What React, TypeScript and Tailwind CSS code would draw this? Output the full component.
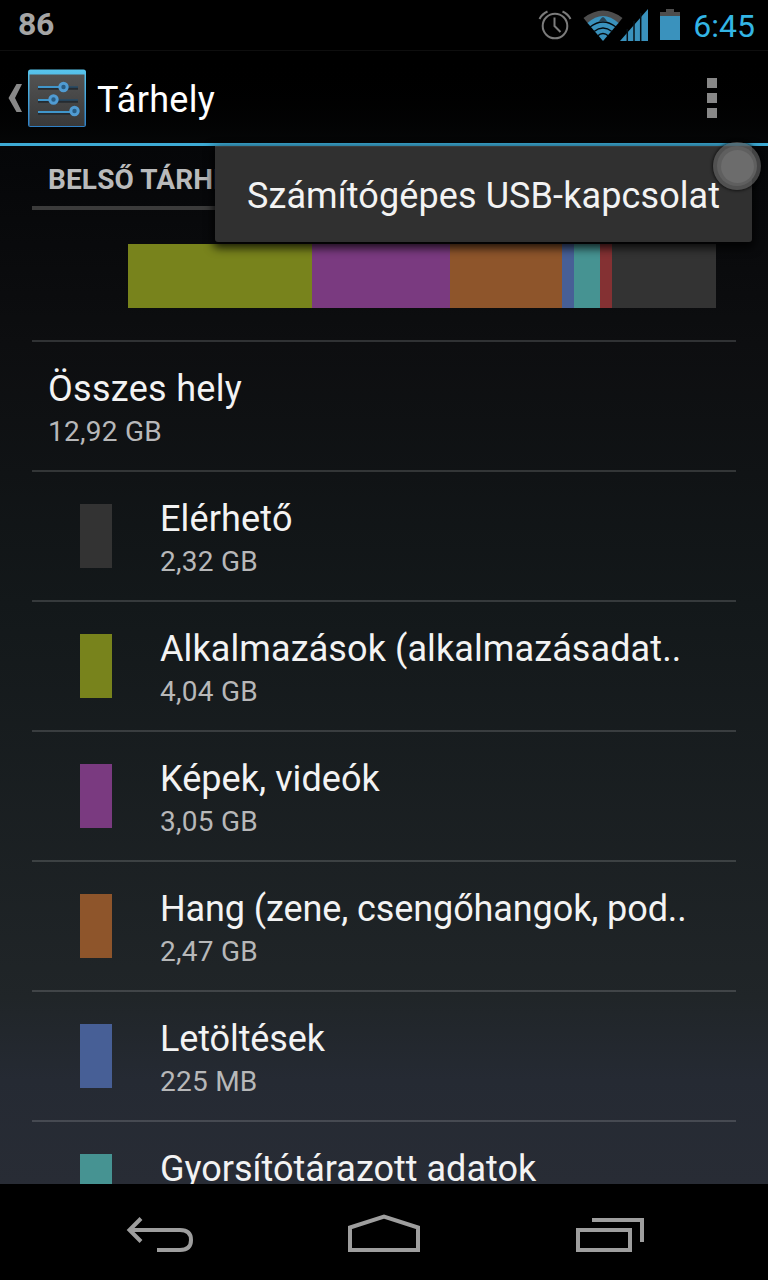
import clsx from "clsx";

type StorageItem = {
  label: string;
  size?: string;
  color: string;
  labelSpacing: string;
};

const segments = [
  { width: "w-[184px]", color: "bg-[#78831c]" },
  { width: "w-[138px]", color: "bg-[#7a3a80]" },
  { width: "w-[112px]", color: "bg-[#8e552b]" },
  { width: "w-[12px]", color: "bg-[#475f96]" },
  { width: "w-[26px]", color: "bg-[#469392]" },
  { width: "w-[12px]", color: "bg-[#843133]" },
  { width: "w-[104px]", color: "bg-[#333333]" },
];

const items: StorageItem[] = [
  { label: "Elérhető", size: "2,32 GB", color: "bg-[#333333]", labelSpacing: "tracking-[0.15px]" },
  { label: "Alkalmazások (alkalmazásadat..", size: "4,04 GB", color: "bg-[#78831c]", labelSpacing: "tracking-[0.1px]" },
  { label: "Képek, videók", size: "3,05 GB", color: "bg-[#7a3a80]", labelSpacing: "tracking-[0.05px]" },
  { label: "Hang (zene, csengőhangok, pod..", size: "2,47 GB", color: "bg-[#8e552b]", labelSpacing: "tracking-[-0.1px]" },
  { label: "Letöltések", size: "225 MB", color: "bg-[#475f96]", labelSpacing: "tracking-[-0.1px]" },
  { label: "Gyorsítótárazott adatok", color: "bg-[#469392]", labelSpacing: "tracking-normal" },
];

const AlarmIcon = () => (
  <svg width="34" height="34" viewBox="0 0 34 34" fill="none" stroke="#7b7b7b" strokeWidth="2">
    <circle cx="17" cy="19" r="12.3" />
    <path d="M16.500 10.500V19l6 6" />
    <path d="M1.500 12Q4 7 9.500 4.500M24.500 4.500Q30 7 32.500 12" />
  </svg>
);

const WifiIcon = () => (
  <svg width="40" height="32" viewBox="0 0 40 32">
    <path d="M.5 9Q20-6 39.500 9L35 14.500Q20 2 5 14.500Z" fill="#4d4d4d" />
    <path d="M4.500 14Q20 0 35.500 14L20 32Z" fill="#3a92bd" />
    <path d="M7 18Q20 8 33 18M11 22.500Q20 15.500 29 22.500M14.500 27Q20 22 25.500 27" fill="none" stroke="#050a0d" strokeWidth="1.500" />
    <path d="M15.500 13L18 9.500q2-3 4 0l2.500 3.500Q20 11.500 15.500 13Z" fill="#2b4554" />
  </svg>
);

const SignalIcon = () => (
  <svg width="28" height="32" viewBox="0 0 28 32">
    <path d="M0 32L28 0V32Z" fill="#3a92bd" />
    <path d="M7.300 20V32M14 12V32M20.700 4V32" stroke="#061116" strokeWidth="1.500" />
  </svg>
);

const BatteryIcon = () => (
  <svg width="20" height="31" viewBox="0 0 20 31">
    <path d="M6 0H14V3H20V8H0V3H6Z" fill="#4d4d4d" />
    <path d="M0 7H20V31H0Z" fill="#3a92bd" />
  </svg>
);

const SettingsIcon = () => (
  <svg width="58" height="59" viewBox="0 0 58 59" fill="none">
    <defs>
      <linearGradient id="plate" x1="0" y1="0" x2="0" y2="1">
        <stop offset="0" stopColor="#535353" />
        <stop offset="1" stopColor="#393939" />
      </linearGradient>
      <linearGradient id="edge" x1="0" y1="0" x2="0" y2="1">
        <stop offset="0" stopColor="#58c5ec" />
        <stop offset="1" stopColor="#2f7fc4" />
      </linearGradient>
    </defs>
    <rect x="0" y="0.500" width="58" height="57.500" rx="2.500" fill="url(#edge)" />
    <rect x="1.500" y="5.500" width="55" height="51.500" fill="url(#plate)" />
    <path d="M10 19.500H50M10 32.500H50M10 44.500H50" stroke="#252b31" strokeWidth="2.500" />
    <path d="M10 18H35M10 31H25M10 43H46" stroke="#4096cb" strokeWidth="2" />
    <path d="M35 18H50M25 31H50" stroke="#244a66" strokeWidth="1.500" />
    <g fill="#285c83" stroke="#509bd2" strokeWidth="3">
      <circle cx="35.500" cy="18" r="3.700" />
      <circle cx="25.500" cy="30.500" r="3.700" />
      <circle cx="46.500" cy="42" r="3.700" />
    </g>
  </svg>
);

const StatusBar = () => (
  <div className="flex h-[50px] items-start bg-black">
    <span className="ml-[18px] mt-[5px] text-[32px] leading-[38px] font-bold tracking-[-0.3px] text-[#a5a5a5]">86</span>
    <div className="ml-auto flex pr-[13px]">
      <div className="mt-[7px]"><AlarmIcon /></div>
      <div className="ml-[11px] mt-[9px]"><WifiIcon /></div>
      <div className="-ml-[3px] mt-[9px]"><SignalIcon /></div>
      <div className="ml-[12px] mt-[9px]"><BatteryIcon /></div>
      <span className="ml-[13px] mt-[7px] text-[32px] leading-[38px] text-[#33b5e5]">6:45</span>
    </div>
  </div>
);

const ActionBar = () => (
  <header className="flex h-[96px] items-center border-t border-b-[3px] border-t-[#0e0e0e] border-b-[#3daad4] bg-gradient-to-b from-black to-[#050607] pt-[2px]">
    <svg className="ml-[8px]" width="15" height="28" viewBox="0 0 15 28">
      <path d="M8.500 0H14L7 14L14 28H8.500L.5 14Z" fill="#888888" />
    </svg>
    <div className="ml-[5px]"><SettingsIcon /></div>
    <h1 className="ml-[11px] mt-[3px] text-[36px] leading-[42px] tracking-[0.3px] text-white">Tárhely</h1>
    <div className="ml-auto mr-[51px] flex flex-col gap-[5px]">
      <span className="size-[10px] bg-[#888888]" />
      <span className="size-[10px] bg-[#888888]" />
      <span className="size-[10px] bg-[#888888]" />
    </div>
  </header>
);

const NavBar = () => (
  <nav className="flex h-[96px] shrink-0 items-center bg-black">
    <svg width="768" height="96" viewBox="0 0 768 96" fill="none" stroke="#9e9e9e" strokeWidth="4">
      <path d="M141 34.500L129.500 46L141 57.500M130 46H180C188 46 191 50 191 56S188 66 180 66H157" />
      <path d="M350 66V43.500L384 32.500L418 43.500V66Z" />
      <path d="M578 46H630V66H578ZM592 36H642V58" />
    </svg>
  </nav>
);

const App: React.FC = () => {
  return (
    <div className="relative flex h-[1280px] w-[768px] flex-col overflow-hidden bg-black font-['Roboto',sans-serif]">
      <StatusBar />
      <ActionBar />

      <main className="flex-1 overflow-hidden bg-[linear-gradient(to_bottom,#050608_0%,#0d0e10_19%,#13181a_44%,#202528_82%,#252a33_90%,#282c35_100%)] px-[32px]">
        <h2 className="h-[64px] border-b-4 border-[#3b3b3b] pl-[16px] pt-[17px] text-[28px] leading-[33px] font-bold tracking-[0.12px] text-[#b9babb]">
          BELSŐ TÁRHELY
        </h2>

        {/* Usage bar */}
        <div className="ml-[96px] mt-[34px] flex h-[64px]">
          {segments.map((segment) => (
            <div key={segment.color} className={clsx(segment.width, segment.color)} />
          ))}
        </div>

        <section className="mt-[32px] h-[130px] border-t-2 border-[#303234] pl-[16px] pt-[26px]">
          <div className="text-[36px] leading-[42px] tracking-[0.3px] text-[#f3f3f3]">Összes hely</div>
          <div className="mt-[5px] text-[28px] leading-[33px] tracking-[0.25px] text-[#b7b8b9]">12,92 GB</div>
        </section>

        {items.map((item) => (
          <section key={item.label} className="flex h-[130px] border-t-2 border-white/15 pl-[48px]">
            <div className={clsx("mt-[32px] h-[64px] w-[32px]", item.color)} />
            <div className="ml-[48px] pt-[26px] whitespace-nowrap">
              <div className={clsx("text-[36px] leading-[42px] text-[#f3f3f3]", item.labelSpacing)}>{item.label}</div>
              {item.size && (
                <div className="mt-[5px] text-[28px] leading-[33px] tracking-[0.25px] text-[#b7b8b9]">{item.size}</div>
              )}
            </div>
          </section>
        ))}
      </main>

      <NavBar />

      {/* Overflow menu */}
      <div className="absolute left-[215px] top-[146px] h-[96px] w-[537px] rounded-b-[3px] border-t border-[#3c3c3c] bg-[#303030] pl-[32px] pt-[28px] text-[36px] leading-[42px] tracking-[0.1px] whitespace-nowrap text-[#f3f3f3] shadow-[0_4px_10px_2px_rgba(0,0,0,0.8)]">
        Számítógépes USB-kapcsolat
      </div>

      {/* Floating touch button */}
      <div className="absolute left-[713px] top-[142px] flex size-[48px] items-center justify-center rounded-full bg-[#606060]/70 shadow-[0_0_3px_1px_rgba(0,0,0,0.6)]">
        <div className="flex size-[40px] items-center justify-center rounded-full bg-[#5f5f5f]">
          <div className="size-[33px] rounded-full bg-[#6c6c6c]" />
        </div>
      </div>
    </div>
  );
};

export default App;
